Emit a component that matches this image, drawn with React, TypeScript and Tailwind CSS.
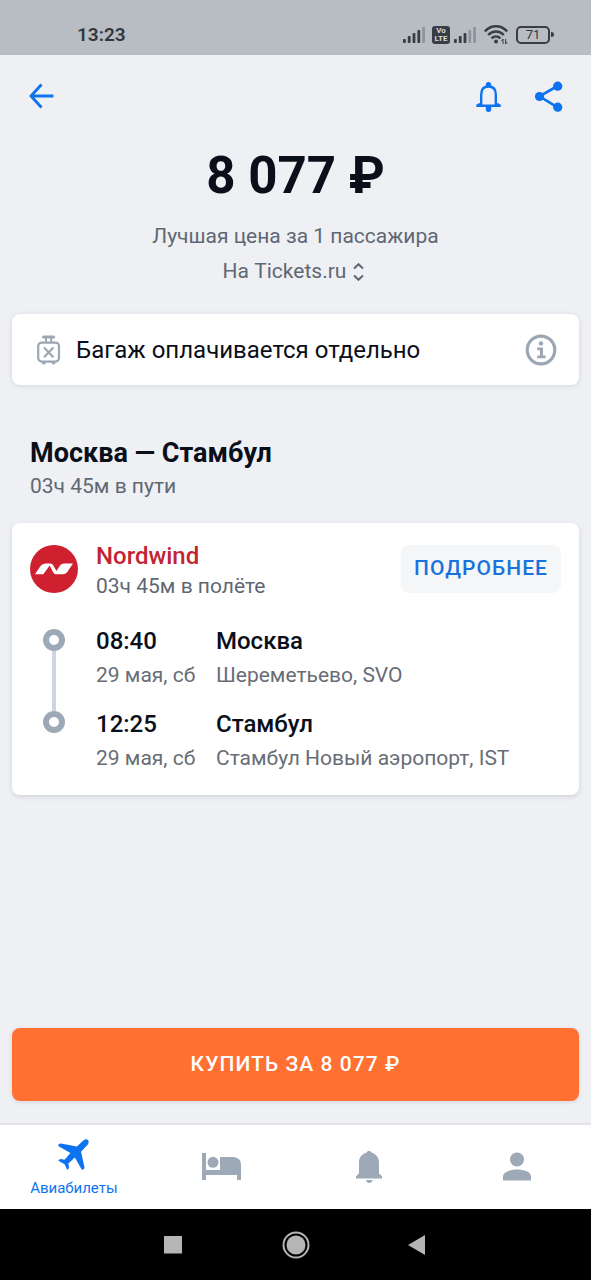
import type { ReactNode } from "react";

interface Stop {
  time: string;
  date: string;
  city: string;
  airport: string;
}

const stops: Stop[] = [
  { time: "08:40", date: "29 мая, сб", city: "Москва", airport: "Шереметьево, SVO" },
  { time: "12:25", date: "29 мая, сб", city: "Стамбул", airport: "Стамбул Новый аэропорт, IST" },
];

function SignalIcon({ level }: { level: number }) {
  const heights = [4, 7, 10, 13, 16];
  return (
    <svg width="22" height="18" viewBox="0 0 22 18">
      {heights.map((h, i) => (
        <rect
          key={h}
          x={i * 4.8}
          y={17 - h}
          width="2.8"
          height={h}
          rx="0.8"
          fill={i < level ? "#3a3d44" : "#8f939b"}
        />
      ))}
    </svg>
  );
}

function WifiIcon() {
  return (
    <svg width="24" height="22" viewBox="0 0 24 22" fill="none" stroke="#3a3d44" strokeWidth="2.5">
      <path d="M0.8 7.4C7.2 0.6 16.8 0.6 23.2 7.4" />
      <path d="M4.2 11C8.6 6.4 15.4 6.4 19.8 11" />
      <path d="M7.6 14.4C10.2 11.8 13.8 11.8 16.4 14.4" />
      <circle cx="12" cy="17.4" r="2" fill="#3a3d44" stroke="none" />
      <path d="M19 20V15L17.4 17M21.6 15v5l1.6-2" strokeWidth="1" />
    </svg>
  );
}

function StatusBar() {
  return (
    <div className="flex h-[55px] items-center justify-between bg-[#b8bcc3] pt-3.5 pr-[37px] pl-[77px] text-[#33363d]">
      <span className="text-[19px] leading-6 font-semibold">13:23</span>
      <div className="flex items-center">
        <SignalIcon level={4} />
        <div className="mr-1 ml-[7px] flex h-[18px] w-[18px] flex-col items-center justify-center rounded-[3px] bg-[#3a3d44] text-[8px] leading-[8px] font-bold text-[#d5d8dd]">
          <span>Vo</span>
          <span>LTE</span>
        </div>
        <SignalIcon level={3} />
        <div className="mr-2 ml-2">
          <WifiIcon />
        </div>
        <div className="flex h-[18px] w-[34px] items-center justify-center rounded-[5px] border-2 border-[#3a3d44] text-[13px] leading-4">
          71
        </div>
        <div className="ml-px h-[5px] w-[3px] rounded-r-sm bg-[#3a3d44]" />
      </div>
    </div>
  );
}

function Header() {
  return (
    <header className="flex h-[82px] items-center justify-between pr-7 pl-[29px] text-[#0d73f0]">
      <button aria-label="Назад">
        <svg width="26" height="26" viewBox="0 0 26 26" fill="none" stroke="currentColor" strokeWidth="2.8">
          <path d="M24.5 13H2M12.500 1.5L2 13l10.500 11.5" />
        </svg>
      </button>
      <div className="flex items-center gap-[33px]">
        <button aria-label="Уведомления">
          <svg width="26" height="32" viewBox="0 0 26 32">
            <circle cx="13.500" cy="4.600" r="2.700" fill="currentColor" />
            <path
              d="M6.200 25V14.500C6.200 9.200 9 6.500 13.500 6.500s7.300 2.700 7.300 8V25"
              fill="none"
              stroke="currentColor"
              strokeWidth="2.400"
            />
            <path d="M1.300 27v-2.300l3-1.700 2.200 1.500h14l2.200-1.500 3 1.700V27z" fill="currentColor" />
            <path d="M10.800 26.500h5.400v2.800a2.700 2.700 0 0 1-5.400 0z" fill="currentColor" />
          </svg>
        </button>
        <button aria-label="Поделиться">
          <svg width="29" height="32" viewBox="0 0 29 32" fill="currentColor">
            <path d="M23.500 6L5.500 16.300l18 11" fill="none" stroke="currentColor" strokeWidth="2.600" />
            <circle cx="23.700" cy="6.200" r="4.600" />
            <circle cx="5.500" cy="16.500" r="4.600" />
            <circle cx="23.700" cy="27.200" r="4.600" />
          </svg>
        </button>
      </div>
    </header>
  );
}

function PriceBlock() {
  return (
    <section className="flex flex-col items-center">
      <h1 className="text-[51px] leading-[78px] font-bold text-[#0a0f1a]">8 077 ₽</h1>
      <p className="mt-1 text-[21px] leading-[35px] text-[#5f6773]">Лучшая цена за 1 пассажира</p>
      <button className="flex items-center gap-[7px] pr-1 text-[21px] leading-[35px] text-[#5f6773]">
        На Tickets.ru
        <svg width="11" height="18" viewBox="0 0 11 18" fill="none" stroke="currentColor" strokeWidth="2">
          <path d="M1 5.5L5.5 1.2 10 5.5M1 12.5l4.5 4.3 4.5-4.3" />
        </svg>
      </button>
    </section>
  );
}

function BaggageCard() {
  return (
    <section className="mx-3 mt-[25px] flex h-[71px] items-center rounded-lg bg-white pr-[22px] pl-[25px] shadow-[0_1px_5px_rgba(60,70,90,0.15)]">
      <svg width="24" height="30" viewBox="0 0 24 30" fill="none" stroke="#9da7b3">
        <rect x="1.2" y="7.6" width="20.8" height="19" rx="3.5" strokeWidth="2.2" />
        <path d="M9 7.5V3M14.2 7.5V3" strokeWidth="2" />
        <path d="M6.6 2h10" strokeWidth="3.2" strokeLinecap="round" />
        <path d="M7 12.6l9.4 9.6M16.4 12.6L7 22.2" strokeWidth="2.2" />
        <path d="M5.2 28.2h3.4M14.8 28.2h3.4" strokeWidth="2" />
      </svg>
      <p className="ml-[15px] flex-1 text-2xl leading-8 text-[#0a0f1a]">Багаж оплачивается отдельно</p>
      <button aria-label="Подробнее о багаже">
        <svg width="32" height="32" viewBox="0 0 32 32">
          <circle cx="16" cy="16" r="13.8" fill="none" stroke="#9da7b3" strokeWidth="3.2" />
          <circle cx="16" cy="9.4" r="2.2" fill="#9da7b3" />
          <path d="M12.2 13.500h5.800v8h2.600V24.200h-8.400v-2.700h2.800v-5.300h-2.800z" fill="#9da7b3" />
        </svg>
      </button>
    </section>
  );
}

function NordwindLogo() {
  return (
    <svg className="mt-1 shrink-0" width="48" height="48" viewBox="0 0 48 48">
      <circle cx="24" cy="24" r="24" fill="#cf202f" />
      <path
        d="M5 29.300L10.500 21Q12.300 18.400 15.500 18.400H20Q22.500 18.400 23.500 20.800L26.500 26 30 20.500Q31.500 18.400 34 18.400H43L37.300 27Q35.500 29.300 33 29.300H26Q24 29.300 23 27L19.700 20.500 13.300 29.300Z"
        fill="#fff"
      />
    </svg>
  );
}

function TimelineDot() {
  return <span className="h-[22px] w-[22px] shrink-0 rounded-full border-[6px] border-[#9da9b7] bg-white" />;
}

function FlightCard() {
  return (
    <section className="mx-3 mt-[21px] rounded-lg bg-white px-[18px] pt-[18px] pb-5 shadow-[0_2px_5px_rgba(60,70,90,0.16)]">
      <div className="flex items-start">
        <NordwindLogo />
        <div className="ml-[18px] flex-1">
          <h3 className="text-2xl leading-[30px] font-medium text-[#c22432]">Nordwind</h3>
          <p className="text-[21px] leading-[30px] text-[#5f6773]">03ч 45м в полёте</p>
        </div>
        <button className="mt-1 h-12 rounded-lg bg-[#f5f6f8] px-[13px] text-[21px] font-medium tracking-wider text-[#1a73dc]">
          ПОДРОБНЕЕ
        </button>
      </div>
      <div className="mt-[23px] flex">
        <div className="flex w-12 flex-col items-center pt-[5px] pb-[42px]">
          <TimelineDot />
          <span className="w-1 flex-1 bg-[#cfd5e0]" />
          <TimelineDot />
        </div>
        <ul className="ml-[18px] flex flex-1 flex-col gap-[15px]">
          {stops.map((stop) => (
            <li key={stop.time} className="flex">
              <div className="w-[120px]">
                <p className="text-2xl leading-[34px] font-medium text-[#0a0f1a]">{stop.time}</p>
                <p className="text-[21px] leading-[34px] text-[#686d75]">{stop.date}</p>
              </div>
              <div className="flex-1">
                <p className="text-2xl leading-[34px] font-medium text-[#0a0f1a]">{stop.city}</p>
                <p className="text-[21px] leading-[34px] text-[#686d75]">{stop.airport}</p>
              </div>
            </li>
          ))}
        </ul>
      </div>
    </section>
  );
}

function Tab({ label, children }: { label: string; children: ReactNode }) {
  return (
    <a href="#" aria-label={label} className="flex items-center justify-center text-[#9da9b7]">
      {children}
    </a>
  );
}

function TabBar() {
  return (
    <nav className="grid h-[86px] grid-cols-4 border-t-2 border-[#e3e4ea] bg-white">
      <a href="#" className="flex flex-col items-center pt-3.5 text-[#0d73f0]">
        <svg width="31" height="31" viewBox="0 0 90 90" fill="currentColor">
          <path d="M75 3Q83 -2 87 3 91 8 87 15L67 37 77 83Q77 87 72 89 70 90 68 87L49 54 30 71 32 83Q31 88 27 90L19 73 1 63Q3 59 8 58L19 60 36 41 3 22Q-1 18 2 15 5 13 8 13L55 22Z" />
        </svg>
        <span className="mt-2 text-[15px] leading-5">Авиабилеты</span>
      </a>
      <Tab label="Отели">
        <svg width="40" height="28" viewBox="0 0 40 28" fill="currentColor">
          <path d="M0 0h4v17h14V4h14q7 1 7 8v15h-4v-5H4v5H0z" />
          <circle cx="11" cy="9.3" r="5.5" />
        </svg>
      </Tab>
      <Tab label="Уведомления">
        <svg width="28" height="34" viewBox="0 0 28 34" fill="currentColor">
          <path d="M11.700 2.500a2.400 2.400 0 0 1 4.600 0C21 3.800 24 7.500 24 12.500V23.500l3 2.800V28.500H1V26.300L4 23.500V12.500C4 7.500 7 3.800 11.700 2.500z" />
          <path d="M11 30h6.500q-.5 3-3.200 3T11 30z" />
        </svg>
      </Tab>
      <Tab label="Профиль">
        <svg width="28" height="30" viewBox="0 0 28 30" fill="currentColor">
          <circle cx="14" cy="7.500" r="7" />
          <path d="M0 28.500v-4C0 20 7 17.500 14 17.500s14 2.500 14 7v4z" />
        </svg>
      </Tab>
    </nav>
  );
}

function SystemNav() {
  return (
    <div className="flex h-[71px] items-center justify-center gap-[98px] bg-black text-[#b5b5b5]">
      <button aria-label="Недавние">
        <svg width="20" height="28" viewBox="0 0 20 28" fill="currentColor">
          <path d="M0 5h18v17.500H0z" />
        </svg>
      </button>
      <button aria-label="Домой">
        <svg width="28" height="28" viewBox="0 0 28 28">
          <circle cx="14" cy="14" r="12.500" fill="none" stroke="currentColor" strokeWidth="2" />
          <circle cx="14" cy="14" r="9.500" fill="currentColor" />
        </svg>
      </button>
      <button aria-label="Обратно">
        <svg width="20" height="28" viewBox="0 0 20 28" fill="currentColor">
          <path d="M0 14L17 4v20z" />
        </svg>
      </button>
    </div>
  );
}

export default function App() {
  return (
    <div className="flex min-h-screen flex-col bg-[#eef0f4] font-[Roboto,sans-serif]">
      <StatusBar />
      <Header />
      <main className="flex flex-1 flex-col">
        <PriceBlock />
        <BaggageCard />
        <div className="mt-[51px] px-[30px]">
          <h2 className="text-[27px] leading-[34px] font-bold text-[#0a0f1a]">Москва — Стамбул</h2>
          <p className="text-[21px] leading-8 text-[#5f6773]">03ч 45м в пути</p>
        </div>
        <FlightCard />
        <button className="mx-3 mt-auto mb-[22px] h-[73px] rounded-lg bg-[#ff7031] text-[21px] font-medium tracking-wider text-white shadow-[0_1px_4px_rgba(60,70,90,0.15)]">
          КУПИТЬ ЗА 8 077 ₽
        </button>
      </main>
      <TabBar />
      <SystemNav />
    </div>
  );
}
